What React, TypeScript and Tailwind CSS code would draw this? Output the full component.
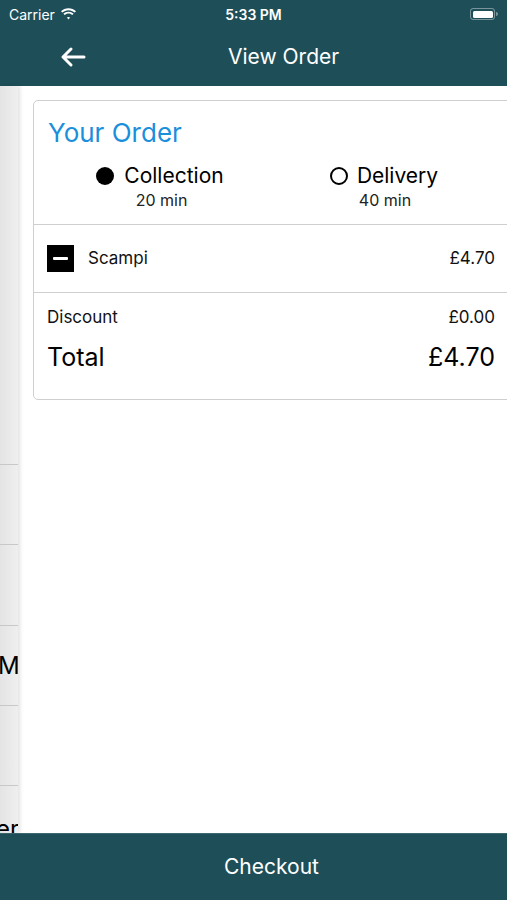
import React from 'react';

const font = { fontFamily: 'Inter, "Liberation Sans", Arial, sans-serif' };

const StatusBar: React.FC = () => (
  <div className="h-[28px] flex items-center justify-between px-[9px] text-white relative">
    <div className="flex items-center gap-[5px] text-[14px]">
      <span>Carrier</span>
      <svg width="17" height="12" viewBox="0 0 17 12" fill="white">
        <path d="M8.5 2.2c2.4 0 4.6.9 6.2 2.4l1.3-1.3C14 1.4 11.4.3 8.5.3S3 1.4 1 3.3l1.3 1.3C3.9 3.1 6.1 2.2 8.5 2.2z" />
        <path d="M8.5 5.6c1.5 0 2.8.6 3.8 1.5l1.3-1.3C12.3 4.5 10.5 3.7 8.5 3.7s-3.8.8-5.1 2.1l1.3 1.3c1-.9 2.3-1.5 3.8-1.5z" />
        <path d="M8.5 8.9c.6 0 1.2.2 1.6.6l-1.6 1.9-1.6-1.9c.4-.4 1-.6 1.6-.6z" />
      </svg>
    </div>
    <span className="absolute left-1/2 -translate-x-1/2 text-[14px] font-semibold">5:33 PM</span>
    <div className="flex items-center">
      <div className="w-[25px] h-[12px] rounded-[3px] border border-white/40 p-[1.5px]">
        <div className="w-full h-full bg-white rounded-[1.5px]" />
      </div>
      <div className="w-[2px] h-[4px] bg-white/40 rounded-r-sm ml-[1px]" />
    </div>
  </div>
);

const App: React.FC = () => {
  return (
    <div className="w-[507px] h-[900px] flex flex-col bg-white overflow-hidden" style={font}>
      {/* header */}
      <div className="bg-[#1e4f59] h-[86px] flex flex-col shrink-0">
        <StatusBar />
        <div className="flex-1 flex items-center relative">
          <svg className="ml-[60px]" width="26" height="22" viewBox="0 0 26 22" fill="none" stroke="white" strokeWidth="3" strokeLinecap="round" strokeLinejoin="round">
            <path d="M24 11H3M11 3l-8 8 8 8" />
          </svg>
          <span className="absolute left-[228px] text-white text-[21px]">View Order</span>
        </div>
      </div>

      {/* body */}
      <div className="flex-1 flex min-h-0">
        {/* underlying view edge */}
        <div className="w-[18px] shrink-0 bg-gradient-to-r from-[#e4e4e4] to-[#efefef] flex flex-col overflow-hidden shadow-[2px_0_4px_rgba(0,0,0,0.12)] z-10">
          <div className="h-[379px] shrink-0 border-b border-[#c8c8c8]" />
          <div className="h-[80px] shrink-0 border-b border-[#c8c8c8]" />
          <div className="h-[81px] shrink-0 border-b border-[#c8c8c8]" />
          <div className="h-[80px] shrink-0 border-b border-[#c8c8c8] flex items-center">
            <span className="text-[24px] text-black -ml-[2px] leading-none">Me</span>
          </div>
          <div className="h-[80px] shrink-0 border-b border-[#c8c8c8]" />
          <div className="flex-1 flex items-end">
            <span className="text-[24px] text-black -ml-[4px] leading-none translate-y-[8px]">er</span>
          </div>
        </div>

        {/* main */}
        <div className="flex-1 pt-[14px] pl-[15px] -mr-[8px]">
          <div className="border border-[#cfcfcf] rounded-[5px] bg-white">
            <div className="pt-[17px] px-[14px] text-[#1b8fdb] text-[26px] leading-[30px]">Your Order</div>
            <div className="flex pt-[16px] pb-[12px] text-black">
              <div className="w-[252px] flex flex-col items-center">
                <div className="flex items-center gap-[10px]">
                  <div className="w-[18px] h-[18px] rounded-full bg-black" />
                  <span className="text-[21px] leading-[24px]">Collection</span>
                </div>
                <span className="text-[16px] leading-[24px] text-[#222] pl-[3px]">20 min</span>
              </div>
              <div className="w-[200px] flex flex-col items-center pr-[4px]">
                <div className="flex items-center gap-[9px]">
                  <div className="w-[18px] h-[18px] rounded-full border-2 border-black" />
                  <span className="text-[21px] leading-[24px]">Delivery</span>
                </div>
                <span className="text-[16px] leading-[24px] text-[#222] pl-[2px]">40 min</span>
              </div>
            </div>
            <div className="border-t border-[#cfcfcf] h-[68px] flex items-center pl-[13px] pr-[19px]">
              <div className="w-[27px] h-[27px] bg-black flex items-center justify-center">
                <div className="w-[15px] h-[3px] bg-white rounded-[1px]" />
              </div>
              <span className="ml-[14px] text-[17px] text-[#111]">Scampi</span>
              <span className="ml-auto text-[17px] text-[#111]">£4.70</span>
            </div>
            <div className="border-t border-[#cfcfcf] pt-[13px] pb-[27px] pl-[13px] pr-[19px]">
              <div className="flex justify-between text-[17px] text-[#111] leading-[22px]">
                <span>Discount</span>
                <span>£0.00</span>
              </div>
              <div className="flex justify-between text-[25px] text-black leading-[30px] mt-[14px]">
                <span>Total</span>
                <span>£4.70</span>
              </div>
            </div>
          </div>
        </div>
      </div>

      {/* checkout */}
      <div className="bg-[#1e4f59] h-[67px] shrink-0 flex items-center justify-center pl-[36px] border-t border-[#3d6870]">
        <span className="text-white text-[21px]">Checkout</span>
      </div>
    </div>
  );
};

export default App;
